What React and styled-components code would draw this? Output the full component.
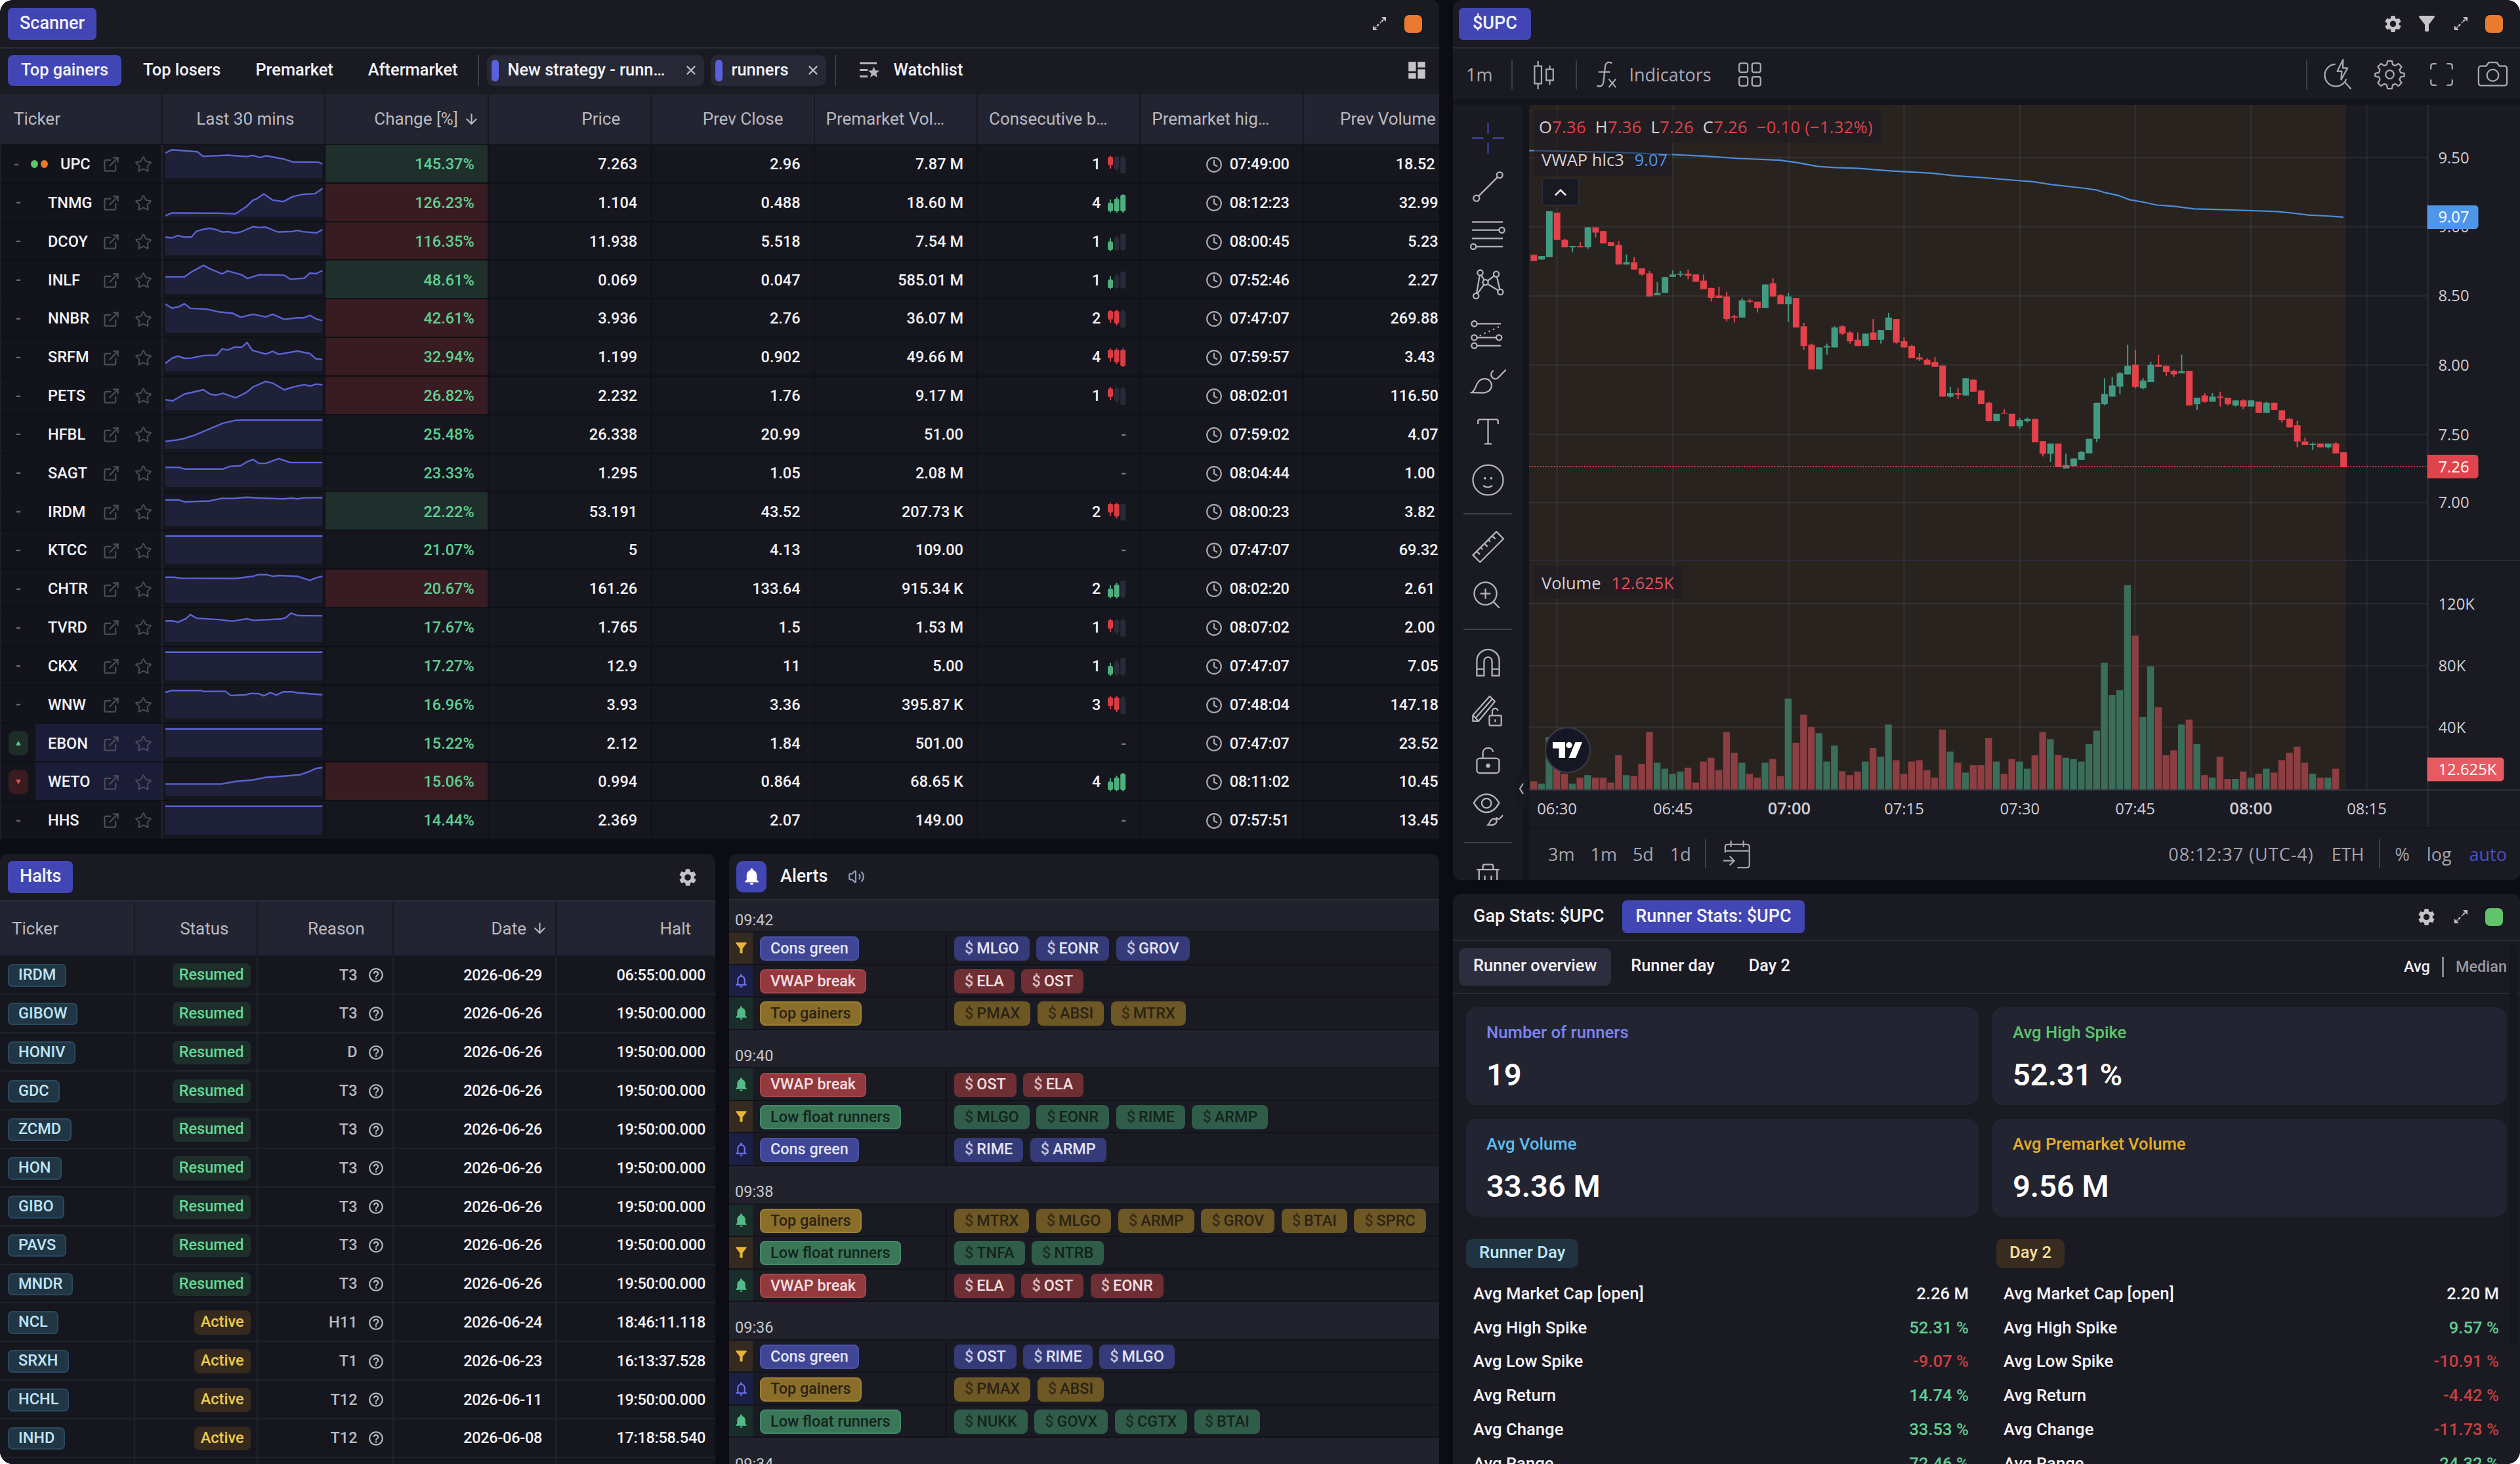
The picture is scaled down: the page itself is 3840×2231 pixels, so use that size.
import React from 'react';
import styled, { createGlobalStyle } from 'styled-components';
import { ArrowDown, Clock, ExternalLink, Star, Volume2, X } from 'lucide-react';
import {
  MdDashboard,
  MdFilterAlt,
  MdHelpOutline,
  MdNotifications,
  MdNotificationsNone,
  MdSettings,
} from 'react-icons/md';

const GlobalStyles = createGlobalStyle`
  :root {
    --page: #0c0c15;
    --panel: #1a1a23;
    --row: #15161e;
    --head: #232431;
    --line: #2b2b38;
    --accent: #4146b4;
    --text: #f2f2f5;
    --grey: #b8b8c0;
    --green: #5fce92;
    --red: #c9403f;
  }

  *,
  *::before,
  *::after {
    box-sizing: border-box;
  }

  body {
    margin: 0;
    background: #ffffff;
    color: var(--text);
    font-family: Roboto, sans-serif;
    font-size: 23.5px;
    font-weight: 500;
    line-height: 1;
  }

  svg {
    display: block;
    flex-shrink: 0;
  }
`;

const AppStyles = styled.div`
  width: 3840px;
  height: 2231px;
  display: grid;
  grid-template-columns: 2193px 1626px;
  column-gap: 21px;
  overflow: hidden;
  background: var(--page);
  border-radius: 20px;
`;

const LeftColumn = styled.div`
  display: grid;
  grid-template-rows: 1279px 930px;
  row-gap: 22px;
  min-width: 0;
`;

const RightColumn = styled.div`
  display: grid;
  grid-template-rows: 1341px 869px;
  row-gap: 21px;
  min-width: 0;
`;

const BottomRow = styled.div`
  display: grid;
  grid-template-columns: 1090px 1082px;
  column-gap: 21px;
  min-height: 0;
`;

const Panel = styled.section`
  display: flex;
  flex-direction: column;
  overflow: hidden;
  min-width: 0;
  background: var(--panel);
  border-radius: ${(props) => props.$radius || '12px 12px 0 0'};
`;

const PanelHeader = styled.header`
  flex-shrink: 0;
  display: flex;
  align-items: center;
  height: ${(props) => props.$height || 74}px;
  padding: 0 26px 0 ${(props) => props.$left || 12}px;
  border-bottom: 2px solid var(--line);
`;

const PanelTab = styled.button`
  height: ${(props) => props.$height || 49}px;
  padding: 0 ${(props) => props.$pad || 18}px 2px;
  margin-right: ${(props) => props.$gap || 0}px;
  border: 0;
  border-radius: 7px;
  background: ${(props) => (props.$active ? 'var(--accent)' : 'transparent')};
  color: var(--text);
  font: 500 27px/1 Roboto, sans-serif;
  white-space: nowrap;
`;

const Spacer = styled.div`
  flex: 1;
`;

const HeaderIcons = styled.div`
  display: flex;
  align-items: center;
  gap: ${(props) => props.$gap || 24}px;
  color: #c3c3c8;
`;

const FilterIcon = styled(MdFilterAlt)`
  margin: 0 -3px 0 -8px;
`;

const ColorSquare = styled.span`
  width: 27px;
  height: 27px;
  border-radius: 7px;
  background: ${(props) => props.$color};
`;

/* ---------- scanner ---------- */

const ScannerTabs = styled.nav`
  display: flex;
  align-items: center;
  height: 69px;
  padding: 2px 17px 5px 12px;
  flex-shrink: 0;
`;

const ScannerTab = styled.button`
  height: 47px;
  padding: 0 20px;
  margin-right: ${(props) => props.$gap ?? 13}px;
  border: 0;
  border-radius: 8px;
  background: ${(props) => (props.$active ? 'var(--accent)' : 'transparent')};
  color: var(--text);
  font: 500 25.4px/1 Roboto, sans-serif;
  white-space: nowrap;
`;

const TabDivider = styled.span`
  width: 2px;
  height: 47px;
  margin: 0 12px 0 ${(props) => props.$left || 0}px;
  background: #3d3e4b;
`;

const StrategyChip = styled.div`
  display: flex;
  align-items: center;
  height: 47px;
  width: ${(props) => props.$width}px;
  padding: 0 9px 0 7px;
  margin-right: ${(props) => props.$gap || 0}px;
  border-radius: 10px;
  background: #262835;
  font-size: 25.4px;

  i {
    width: 11px;
    height: 33px;
    margin-right: 13px;
    border-radius: 6px;
    background: #5a61dd;
  }

  svg {
    margin-left: auto;
    color: #c3c3c8;
  }
`;

const WatchlistLink = styled.div`
  display: flex;
  align-items: center;
  gap: 21px;
  margin-left: 24px;
  color: #b5b5bb;
  font-size: 25.4px;

  b {
    color: var(--text);
    font-weight: 500;
  }
`;

const ScannerGrid = styled.div`
  display: grid;
  grid-template-columns: 248px repeat(7, 248.4px) 206px;
  height: ${(props) => (props.$head ? '78px' : '58.84px')};
  flex-shrink: 0;
`;

const HeadCell = styled.div`
  display: flex;
  align-items: center;
  justify-content: ${(props) => (props.$align === 'left' ? 'flex-start' : 'flex-end')};
  padding: 0 ${(props) => props.$right ?? 46}px 0 ${(props) => props.$left ?? 15}px;
  gap: 8px;
  background: var(--head);
  border-right: 2px solid #171821;
  border-bottom: 2px solid #12131a;
  color: #b9b9c1;
  font-size: 26px;
  font-weight: 400;
  white-space: nowrap;

  &:last-child {
    border-right: 0;
  }
`;

const cellColors = {
  green: '#1e2f2c',
  red: '#391c21',
};

const ScannerCell = styled.div`
  display: flex;
  align-items: center;
  justify-content: flex-end;
  gap: 11px;
  padding: 3px ${(props) => props.$right ?? 20}px 0 0;
  background: ${(props) => cellColors[props.$tone] || 'var(--row)'};
  border-right: 2px solid #101119;
  border-bottom: 2px solid #0f1017;
  color: ${(props) => (props.$green ? 'var(--green)' : 'var(--text)')};
  letter-spacing: ${(props) => (props.$tight ? '-0.2px' : '0')};
  white-space: nowrap;

  &:last-child {
    border-right: 0;
  }
`;

const TickerCell = styled.div`
  display: flex;
  align-items: center;
  background: #12131b;
  border-left: 2px solid #1f2029;
  border-right: 2px solid #23242e;
  border-bottom: 2px solid #0f1017;
`;

const TrendSlot = styled.div`
  display: flex;
  align-items: center;
  justify-content: ${(props) => (props.$dots ? 'flex-start' : 'center')};
  width: ${(props) => (props.$dots ? 71 : 52)}px;
  padding: 2px 0 0 ${(props) => (props.$dots ? 19 : 0)}px;
  color: #6b6b74;
`;

const Dot = styled.span`
  width: 11px;
  height: 12px;
  margin-left: ${(props) => props.$left}px;
  border-radius: 50%;
  background: ${(props) => props.$color};
`;

const TrendBadge = styled.span`
  display: flex;
  align-items: center;
  justify-content: center;
  width: 30px;
  height: 37px;
  border-radius: 9px;
  background: ${(props) => (props.$up ? '#1d2e29' : '#3a1b20')};
`;

const TickerName = styled.div`
  flex: 1;
  display: flex;
  align-items: center;
  height: 100%;
  padding: 3px 0 0 19px;
  background: ${(props) => (props.$highlight ? '#1a1c38' : 'transparent')};

  svg {
    color: #4b4c57;
  }

  svg:first-of-type {
    margin-left: auto;
    margin-right: 22px;
  }

  svg:last-of-type {
    margin-right: 14px;
  }
`;

const SparkCell = styled(ScannerCell)`
  padding: 0 3px 6px 4px;
  align-items: flex-end;
  justify-content: flex-start;
`;

const Muted = styled.span`
  color: #7d7d86;
`;

const flat = [[0, 106], [338, 106]];

const scannerRows = [
  {
    ticker: 'UPC', dots: true, change: '145.37%', tone: 'green', price: '7.263', close: '2.96', vol: '7.87 M',
    bars: 1, dir: 'down', time: '07:49:00', prev: '18.52', wide: true,
    spark: [[0, 95], [14, 107], [69, 100], [81, 83], [134, 87], [174, 82], [189, 86], [204, 78], [216, 85], [254, 73], [274, 62], [329, 61], [338, 54]],
  },
  {
    ticker: 'TNMG', change: '126.23%', tone: 'red', price: '1.104', close: '0.488', vol: '18.60 M',
    bars: 4, dir: 'up', time: '08:12:23', prev: '32.99',
    spark: [[0, 6], [14, 16], [114, 15], [151, 13], [174, 39], [189, 64], [197, 69], [212, 87], [231, 64], [254, 58], [274, 77], [294, 85], [322, 88], [338, 107]],
  },
  {
    ticker: 'DCOY', change: '116.35%', tone: 'red', price: '11.938', close: '5.518', vol: '7.54 M',
    bars: 1, dir: 'up', time: '08:00:45', prev: '5.23',
    spark: [[0, 68], [14, 65], [27, 74], [41, 68], [56, 68], [67, 90], [82, 97], [96, 101], [109, 96], [122, 87], [136, 88], [149, 83], [162, 87], [189, 107], [202, 104], [216, 105], [242, 87], [274, 89], [284, 93], [296, 88], [326, 84], [338, 96]],
  },
  {
    ticker: 'INLF', change: '48.61%', tone: 'green', price: '0.069', close: '0.047', vol: '585.01 M',
    bars: 1, dir: 'up', time: '07:52:46', prev: '2.27',
    spark: [[0, 64], [41, 64], [54, 80], [82, 107], [96, 94], [122, 75], [134, 86], [164, 72], [176, 58], [202, 72], [256, 70], [269, 55], [299, 59], [311, 78], [324, 76], [338, 87]],
  },
  {
    ticker: 'NNBR', change: '42.61%', tone: 'red', price: '3.936', close: '2.76', vol: '36.07 M',
    bars: 2, dir: 'down', time: '07:47:07', prev: '269.88',
    spark: [[0, 107], [14, 92], [29, 97], [41, 108], [54, 91], [89, 88], [114, 78], [144, 73], [162, 58], [189, 69], [216, 59], [231, 69], [256, 50], [284, 56], [299, 56], [311, 65], [324, 52], [338, 45]],
  },
  {
    ticker: 'SRFM', change: '32.94%', tone: 'red', price: '1.199', close: '0.902', vol: '49.66 M',
    bars: 4, dir: 'down', time: '07:59:57', prev: '3.43', wide: true,
    spark: [[0, 30], [14, 49], [27, 57], [41, 49], [56, 50], [82, 59], [111, 61], [122, 84], [134, 80], [149, 91], [164, 90], [176, 108], [187, 79], [216, 65], [231, 75], [244, 64], [284, 76], [311, 67], [324, 47], [338, 44]],
  },
  {
    ticker: 'PETS', change: '26.82%', tone: 'red', price: '2.232', close: '1.76', vol: '9.17 M',
    bars: 1, dir: 'down', time: '08:02:01', prev: '116.50',
    spark: [[0, 39], [16, 35], [41, 60], [82, 76], [96, 60], [109, 56], [124, 63], [151, 46], [174, 66], [189, 87], [216, 107], [231, 101], [256, 76], [274, 86], [299, 95], [312, 90], [324, 97], [338, 95]],
  },
  {
    ticker: 'HFBL', change: '25.48%', price: '26.338', close: '20.99', vol: '51.00', time: '07:59:02', prev: '4.07',
    spark: [[0, 28], [24, 33], [39, 38], [64, 52], [94, 74], [124, 96], [149, 106], [164, 107], [338, 107]],
  },
  {
    ticker: 'SAGT', change: '23.33%', price: '1.295', close: '1.05', vol: '2.08 M', time: '08:04:44', prev: '1.00', wide: true,
    spark: [[0, 73], [29, 73], [41, 67], [124, 67], [139, 77], [162, 79], [176, 94], [189, 103], [201, 88], [216, 88], [244, 106], [269, 91], [338, 91]],
  },
  {
    ticker: 'IRDM', change: '22.22%', tone: 'green', price: '53.191', close: '43.52', vol: '207.73 K',
    bars: 2, dir: 'down', time: '08:00:23', prev: '3.82', wide: true,
    spark: [[0, 96], [29, 96], [41, 89], [94, 92], [122, 102], [144, 101], [174, 106], [204, 103], [254, 100], [272, 103], [284, 100], [299, 104], [338, 105]],
  },
  { ticker: 'KTCC', change: '21.07%', price: '5', close: '4.13', vol: '109.00', time: '07:47:07', prev: '69.32', spark: flat },
  {
    ticker: 'CHTR', change: '20.67%', tone: 'red', price: '161.26', close: '133.64', vol: '915.34 K',
    bars: 2, dir: 'up', time: '08:02:20', prev: '2.61', wide: true,
    spark: [[0, 96], [19, 96], [34, 93], [151, 92], [189, 100], [199, 106], [219, 106], [231, 100], [244, 103], [284, 100], [311, 85], [324, 94], [338, 100]],
  },
  {
    ticker: 'TVRD', change: '17.67%', price: '1.765', close: '1.5', vol: '1.53 M',
    bars: 1, dir: 'down', time: '08:07:02', prev: '2.00', wide: true,
    spark: [[0, 78], [16, 78], [27, 73], [44, 86], [54, 102], [67, 88], [114, 83], [144, 77], [176, 86], [189, 80], [249, 85], [259, 90], [271, 107], [284, 98], [338, 97]],
  },
  { ticker: 'CKX', change: '17.27%', price: '12.9', close: '11', vol: '5.00', bars: 1, dir: 'up', time: '07:47:07', prev: '7.05', spark: flat },
  {
    ticker: 'WNW', change: '16.96%', price: '3.93', close: '3.36', vol: '395.87 K',
    bars: 3, dir: 'down', time: '07:48:04', prev: '147.18',
    spark: [[0, 98], [14, 105], [76, 105], [84, 101], [129, 102], [141, 86], [174, 89], [184, 94], [201, 93], [212, 85], [226, 97], [239, 88], [254, 100], [274, 100], [284, 96], [338, 89]],
  },
  { ticker: 'EBON', trend: 'up', change: '15.22%', price: '2.12', close: '1.84', vol: '501.00', time: '07:47:07', prev: '23.52', spark: flat },
  {
    ticker: 'WETO', trend: 'down', change: '15.06%', tone: 'red', price: '0.994', close: '0.864', vol: '68.65 K',
    bars: 4, dir: 'up', time: '08:11:02', prev: '10.45',
    spark: [[0, 45], [122, 45], [149, 54], [189, 60], [214, 69], [254, 74], [289, 79], [309, 91], [324, 103], [338, 106]],
  },
  { ticker: 'HHS', change: '14.44%', price: '2.369', close: '2.07', vol: '149.00', time: '07:57:51', prev: '13.45', spark: flat },
];

function ExpandIcon({ size = 22 }) {
  return (
    <svg width={size} height={size} viewBox="0 0 22 22" fill="currentColor" stroke="currentColor">
      <path d="M14 1h7v7zM8 21H1v-7z" stroke="none" />
      <path d="M17 5l-5 5M10 12l-5 5" strokeWidth="2.4" fill="none" strokeDasharray="4 1.5" />
    </svg>
  );
}

function WatchlistIcon() {
  return (
    <svg width="30" height="26" viewBox="0 0 30 26" fill="currentColor">
      <path d="M0 1h26v3H0zM0 11h12v3H0zM0 21h12v3H0z" />
      <path d="M21.5 7.5l2.4 5.8 6.1.5-4.7 4 1.5 6.1-5.3-3.3-5.3 3.3 1.5-6.1-4.7-4 6.1-.5z" />
    </svg>
  );
}

function Sparkline({ points }) {
  const line = points.map(([x, h]) => `${(x * 0.708).toFixed(1)},${(46 - h * 0.408).toFixed(1)}`).join(' ');
  return (
    <svg width="239.3" height="46" viewBox="0 0 239.3 46" overflow="visible">
      <polygon points={`0,46 ${line} 239.3,46`} fill="#1f2139" />
      <polyline points={line} fill="none" stroke="#5b63d6" strokeWidth="2.4" strokeLinejoin="round" />
    </svg>
  );
}

// three little candles growing (up) or hanging (down), lit up to the streak length
function StreakIcon({ count, dir }) {
  const lit = dir === 'up' ? '#4fae7d' : '#d63c43';
  const heights = [20, 24, 28];
  return (
    <svg width="28" height="28" viewBox="0 0 28 28">
      {heights.map((h, i) => {
        const on = i < count && !(i === 2 && count < 4);
        const fill = on ? lit : '#2a2b38';
        const x = i * 9.6;
        const y = dir === 'up' ? 28 - h : 0;
        const bodyY = dir === 'up' ? y + 5 - i * 2 : y + 2;
        return (
          <g key={h} fill={fill}>
            <rect x={x + 3} y={y} width="2" height={h} />
            <rect x={x} y={bodyY} width="8" height={h - 7 + i * 2} rx="2" />
          </g>
        );
      })}
    </svg>
  );
}

function Scanner() {
  return (
    <Panel $radius="0 12px 0 0">
      <PanelHeader>
        <PanelTab $active>Scanner</PanelTab>
        <Spacer />
        <HeaderIcons $gap={27}>
          <ExpandIcon />
          <ColorSquare $color="#ea7b2e" />
        </HeaderIcons>
      </PanelHeader>
      <ScannerTabs>
        <ScannerTab $active>Top gainers</ScannerTab>
        <ScannerTab>Top losers</ScannerTab>
        <ScannerTab>Premarket</ScannerTab>
        <ScannerTab $gap={11}>Aftermarket</ScannerTab>
        <TabDivider />
        <StrategyChip $width={331} $gap={10}>
          <i />
          New strategy - runn…
          <X size={22} strokeWidth={2.4} />
        </StrategyChip>
        <StrategyChip $width={176}>
          <i />
          runners
          <X size={22} strokeWidth={2.4} />
        </StrategyChip>
        <TabDivider $left={13} />
        <WatchlistLink>
          <WatchlistIcon />
          <b>Watchlist</b>
        </WatchlistLink>
        <Spacer />
        <HeaderIcons>
          <MdDashboard size={34} />
        </HeaderIcons>
      </ScannerTabs>
      <ScannerGrid $head>
        <HeadCell $align="left" $left={21}>Ticker</HeadCell>
        <HeadCell>Last 30 mins</HeadCell>
        <HeadCell $right={12}>
          Change [%]
          <ArrowDown size={25} strokeWidth={2} />
        </HeadCell>
        <HeadCell>Price</HeadCell>
        <HeadCell>Prev Close</HeadCell>
        <HeadCell $align="left" $left={17}>Premarket Vol…</HeadCell>
        <HeadCell $align="left" $left={17}>Consecutive b…</HeadCell>
        <HeadCell $align="left" $left={17}>Premarket hig…</HeadCell>
        <HeadCell $right={5}>Prev Volume</HeadCell>
      </ScannerGrid>
      {scannerRows.map((row) => (
        <ScannerGrid key={row.ticker}>
          <TickerCell>
            <TrendSlot $dots={row.dots}>
              {!row.trend && '-'}
              {row.dots && (
                <>
                  <Dot $left={18} $color="#5fc46a" />
                  <Dot $left={4} $color="#ea7b2e" />
                </>
              )}
              {row.trend && (
                <TrendBadge $up={row.trend === 'up'}>
                  <svg width="8" height="7" viewBox="0 0 8 7">
                    {row.trend === 'up' ? (
                      <path d="M4 0l4 7H0z" fill="#58c98a" />
                    ) : (
                      <path d="M4 7l4-7H0z" fill="#e5544f" />
                    )}
                  </svg>
                </TrendBadge>
              )}
            </TrendSlot>
            <TickerName $highlight={row.trend}>
              {row.ticker}
              <ExternalLink size={27} strokeWidth={2} />
              <Star size={27} strokeWidth={1.8} />
            </TickerName>
          </TickerCell>
          <SparkCell>
            <Sparkline points={row.spark} />
          </SparkCell>
          <ScannerCell $green $tone={row.tone}>{row.change}</ScannerCell>
          <ScannerCell>{row.price}</ScannerCell>
          <ScannerCell>{row.close}</ScannerCell>
          <ScannerCell>{row.vol}</ScannerCell>
          <ScannerCell>
            {row.bars ? (
              <>
                {row.bars}
                <StreakIcon count={row.bars} dir={row.dir} />
              </>
            ) : (
              <Muted>-</Muted>
            )}
          </ScannerCell>
          <ScannerCell $tight>
            <Clock size={26} strokeWidth={2} color="#a9a9b0" />
            {row.time}
          </ScannerCell>
          <ScannerCell $right={row.wide ? 6 : 1}>{row.prev}</ScannerCell>
        </ScannerGrid>
      ))}
    </Panel>
  );
}

/* ---------- halts ---------- */

const HaltsGrid = styled.div`
  display: grid;
  grid-template-columns: 206px 186.5px 207px 248.5px 242px;
  height: ${(props) => (props.$head ? '83px' : '58.82px')};
  flex-shrink: 0;
`;

const HaltHead = styled(HeadCell)`
  border-bottom-color: #1c1d27;
`;

const HaltCell = styled.div`
  display: flex;
  align-items: center;
  justify-content: ${(props) => (props.$left ? 'flex-start' : 'flex-end')};
  gap: 15px;
  padding: 2px ${(props) => props.$right ?? 20}px 0 ${(props) => props.$left ?? 0}px;
  background: var(--row);
  border-right: 2px solid #21222c;
  border-bottom: 2px solid #21222c;
  color: ${(props) => (props.$muted ? '#b9bac2' : 'var(--text)')};
  letter-spacing: ${(props) => (props.$tight ? '-0.3px' : '0')};

  &:last-child {
    border-right: 0;
  }
`;

const TickerTag = styled.span`
  padding: 3px 14px 4px;
  border: 2px solid #28495c;
  border-radius: 7px;
  background: #203644;
  color: #bfe3f5;
`;

const StatusTag = styled.span`
  padding: 6px 10px 7px;
  border-radius: 8px;
  background: ${(props) => (props.$active ? '#362a1f' : '#1e2f2b')};
  color: ${(props) => (props.$active ? '#eccb4a' : '#63d793')};
`;

const halts = [
  ['IRDM', 'Resumed', 'T3', '2026-06-29', '06:55:00.000'],
  ['GIBOW', 'Resumed', 'T3', '2026-06-26', '19:50:00.000'],
  ['HONIV', 'Resumed', 'D', '2026-06-26', '19:50:00.000'],
  ['GDC', 'Resumed', 'T3', '2026-06-26', '19:50:00.000'],
  ['ZCMD', 'Resumed', 'T3', '2026-06-26', '19:50:00.000'],
  ['HON', 'Resumed', 'T3', '2026-06-26', '19:50:00.000'],
  ['GIBO', 'Resumed', 'T3', '2026-06-26', '19:50:00.000'],
  ['PAVS', 'Resumed', 'T3', '2026-06-26', '19:50:00.000'],
  ['MNDR', 'Resumed', 'T3', '2026-06-26', '19:50:00.000'],
  ['NCL', 'Active', 'H11', '2026-06-24', '18:46:11.118'],
  ['SRXH', 'Active', 'T1', '2026-06-23', '16:13:37.528'],
  ['HCHL', 'Active', 'T12', '2026-06-11', '19:50:00.000'],
  ['INHD', 'Active', 'T12', '2026-06-08', '17:18:58.540'],
];

function Halts() {
  return (
    <Panel>
      <PanelHeader $height={73}>
        <PanelTab $active>Halts</PanelTab>
        <Spacer />
        <HeaderIcons>
          <MdSettings size={32} />
        </HeaderIcons>
      </PanelHeader>
      <HaltsGrid $head>
        <HaltHead $align="left" $left={18}>Ticker</HaltHead>
        <HaltHead $right={42}>Status</HaltHead>
        <HaltHead $right={42}>Reason</HaltHead>
        <HaltHead $right={11}>
          Date
          <ArrowDown size={25} strokeWidth={2} />
        </HaltHead>
        <HaltHead $right={37}>Halt</HaltHead>
      </HaltsGrid>
      {halts.map(([ticker, status, reason, date, time]) => (
        <HaltsGrid key={ticker}>
          <HaltCell $left={12}>
            <TickerTag>{ticker}</TickerTag>
          </HaltCell>
          <HaltCell $right={9}>
            <StatusTag $active={status === 'Active'}>{status}</StatusTag>
          </HaltCell>
          <HaltCell $muted $right={12}>
            {reason}
            <MdHelpOutline size={26} />
          </HaltCell>
          <HaltCell $tight>{date}</HaltCell>
          <HaltCell $tight $right={15}>{time}</HaltCell>
        </HaltsGrid>
      ))}
      <HaltsGrid>
        <HaltCell />
        <HaltCell />
        <HaltCell />
        <HaltCell />
        <HaltCell />
      </HaltsGrid>
    </Panel>
  );
}

/* ---------- alerts ---------- */

const BellTab = styled.button`
  display: flex;
  align-items: center;
  justify-content: center;
  width: 46px;
  height: 48px;
  padding: 0;
  border: 0;
  border-radius: 10px;
  background: var(--accent);
  color: #ffffff;
`;

const AlertsTitle = styled.h2`
  margin: 0 31px 0 21px;
  font-size: 27px;
  font-weight: 500;
`;

const AlertTime = styled.div`
  display: flex;
  align-items: flex-end;
  height: ${(props) => (props.$first ? 49 : 58.8)}px;
  padding: 0 0 5px 9px;
  flex-shrink: 0;
  background: #21222c;
  border-bottom: 2px solid #14151d;
  color: #c7c8ce;
  font-weight: 400;
`;

const AlertRow = styled.div`
  display: grid;
  grid-template-columns: 36px 296px 1fr;
  height: 49.5px;
  flex-shrink: 0;
  border-bottom: 2px solid #12131a;
`;

const kindColors = {
  filter: { bg: '#352a20', fg: '#e9b43a' },
  outline: { bg: '#1c1f45', fg: '#6d75ee' },
  bell: { bg: '#1b2d2a', fg: '#54bb86' },
};

const AlertKind = styled.div`
  display: flex;
  align-items: center;
  justify-content: center;
  background: ${(props) => kindColors[props.$kind].bg};
  color: ${(props) => kindColors[props.$kind].fg};
`;

const strategyColors = {
  'Cons green': { name: '#3f4695', border: '#4a52ab', tick: '#353a78', text: '#e3e4f4' },
  'VWAP break': { name: '#93393d', border: '#a64549', tick: '#6e2f34', text: '#f2dfe0' },
  'Top gainers': { name: '#8b6e2a', border: '#9c7d33', tick: '#6d5725', text: '#2a2314' },
  'Low float runners': { name: '#3a7758', border: '#45896a', tick: '#305d49', text: '#14231d' },
};

const AlertCell = styled.div`
  display: flex;
  align-items: center;
  gap: 10.5px;
  padding: 2px 0 0 11px;
  border-right: ${(props) => (props.$divider ? '2px solid #12131a' : '0')};
`;

const AlertTag = styled.span`
  display: flex;
  align-items: center;
  height: 37px;
  padding: 0 14px;
  border: 2px solid ${(props) => strategyColors[props.$strategy][props.$main ? 'border' : 'tick']};
  border-radius: 8px;
  background: ${(props) => strategyColors[props.$strategy][props.$main ? 'name' : 'tick']};
  color: ${(props) => strategyColors[props.$strategy].text};
  font-size: 23.4px;
  white-space: nowrap;

  small {
    margin-right: 5px;
    font-size: inherit;
    opacity: 0.8;
  }
`;

const alertGroups = [
  {
    time: '09:42',
    rows: [
      ['filter', 'Cons green', ['MLGO', 'EONR', 'GROV']],
      ['outline', 'VWAP break', ['ELA', 'OST']],
      ['bell', 'Top gainers', ['PMAX', 'ABSI', 'MTRX']],
    ],
  },
  {
    time: '09:40',
    rows: [
      ['bell', 'VWAP break', ['OST', 'ELA']],
      ['filter', 'Low float runners', ['MLGO', 'EONR', 'RIME', 'ARMP']],
      ['outline', 'Cons green', ['RIME', 'ARMP']],
    ],
  },
  {
    time: '09:38',
    rows: [
      ['bell', 'Top gainers', ['MTRX', 'MLGO', 'ARMP', 'GROV', 'BTAI', 'SPRC']],
      ['filter', 'Low float runners', ['TNFA', 'NTRB']],
      ['bell', 'VWAP break', ['ELA', 'OST', 'EONR']],
    ],
  },
  {
    time: '09:36',
    rows: [
      ['filter', 'Cons green', ['OST', 'RIME', 'MLGO']],
      ['outline', 'Top gainers', ['PMAX', 'ABSI']],
      ['bell', 'Low float runners', ['NUKK', 'GOVX', 'CGTX', 'BTAI']],
    ],
  },
  { time: '09:34', rows: [] },
];

const kindIcons = {
  filter: MdFilterAlt,
  outline: MdNotificationsNone,
  bell: MdNotifications,
};

function Alerts() {
  return (
    <Panel>
      <PanelHeader $height={71} $left={11}>
        <BellTab>
          <MdNotifications size={31} />
        </BellTab>
        <AlertsTitle>Alerts</AlertsTitle>
        <Volume2 size={26} color="#8f9cb8" />
      </PanelHeader>
      {alertGroups.map((group, i) => (
        <React.Fragment key={group.time}>
          <AlertTime $first={i === 0}>{group.time}</AlertTime>
          {group.rows.map(([kind, strategy, tickers]) => {
            const Icon = kindIcons[kind];
            return (
              <AlertRow key={strategy}>
                <AlertKind $kind={kind}>
                  <Icon size={25} />
                </AlertKind>
                <AlertCell $divider>
                  <AlertTag $main $strategy={strategy}>{strategy}</AlertTag>
                </AlertCell>
                <AlertCell>
                  {tickers.map((ticker) => (
                    <AlertTag key={ticker} $strategy={strategy}>
                      <small>$</small>
                      {ticker}
                    </AlertTag>
                  ))}
                </AlertCell>
              </AlertRow>
            );
          })}
        </React.Fragment>
      ))}
    </Panel>
  );
}

/* ---------- chart ---------- */

const chartFont = "'Open Sans', 'Noto Sans', sans-serif";

const ChartToolbar = styled.div`
  display: flex;
  align-items: center;
  height: 77px;
  flex-shrink: 0;
  padding: 2px 14px 0 20px;
  color: #a9aab2;
  font: 400 27px/1 ${chartFont};
`;

const ToolbarRule = styled.span`
  width: 2px;
  height: 44px;
  margin: 0 ${(props) => props.$right ?? 0}px 0 ${(props) => props.$left ?? 0}px;
  background: #3e3f4a;
`;

const ToolbarActions = styled.div`
  display: flex;
  gap: 23.3px;
`;

const ChartBody = styled.div`
  flex: 1;
  display: grid;
  grid-template-columns: 106px 1510px;
  column-gap: 10px;
  padding-top: 9px;
  min-height: 0;
  background: #14151d;
`;

const ToolRail = styled.div`
  display: flex;
  flex-direction: column;
  align-items: center;
  padding-top: 13px;
  overflow: hidden;
  background: var(--panel);
  border-radius: 0 8px 0 0;
  color: #b4b5bc;
`;

const ToolButton = styled.div`
  flex-shrink: 0;
  display: flex;
  align-items: center;
  justify-content: center;
  height: 74.5px;
  color: ${(props) => (props.$active ? '#3f449f' : 'inherit')};
`;

const ToolDivider = styled.div`
  flex-shrink: 0;
  width: 74px;
  height: 2px;
  margin: 12.5px 0;
  background: #3f404c;
`;

const ChartArea = styled.div`
  position: relative;
  display: flex;
  flex-direction: column;
  justify-content: space-between;
  min-height: 0;
`;

const ChartFooter = styled.div`
  display: flex;
  align-items: center;
  height: 79px;
  padding: 0 20px 1px 29px;
  background: var(--panel);
  color: #a3a4ad;
  font: 400 27px/1 ${chartFont};
`;

const FooterItem = styled.span`
  margin-right: ${(props) => props.$gap ?? 27}px;
  letter-spacing: ${(props) => props.$spacing || 0};
  color: ${(props) => (props.$accent ? '#4c51cb' : 'inherit')};
`;

const Legend = styled.div`
  position: absolute;
  top: ${(props) => props.$top}px;
  left: 8px;
  height: 50px;
  padding: 2px ${(props) => props.$right ?? 12}px 0 ${(props) => props.$pad ?? 11}px;
  display: flex;
  align-items: center;
  background: rgba(27, 26, 35, 0.55);
  color: #d3d3d7;
  font: 400 25.5px/1 ${chartFont};
  letter-spacing: ${(props) => props.$spacing || 0};
  white-space: nowrap;

  em {
    margin-right: 14px;
    color: ${(props) => props.$color};
    font-style: normal;
  }

  em:last-child {
    margin-right: 0;
  }

  b {
    margin-right: 16px;
    font-weight: 400;
  }
`;

const CollapseButton = styled.button`
  position: absolute;
  top: 111px;
  left: 19px;
  display: flex;
  align-items: center;
  justify-content: center;
  width: 58px;
  height: 43px;
  padding: 0;
  border: 2px solid #2b2c3b;
  border-radius: 6px;
  background: #191922;
`;

const RailHandle = styled.div`
  position: absolute;
  top: 1015px;
  left: -21px;
  display: flex;
  align-items: center;
  justify-content: center;
  width: 18px;
  height: 54px;
  border-radius: 9px;
  background: #181820;
`;

const LogoBadge = styled.div`
  position: absolute;
  top: 948px;
  left: 24px;
  display: flex;
  align-items: center;
  justify-content: center;
  width: 70px;
  height: 70px;
  border: 2px solid #3b3b4a;
  border-radius: 50%;
  background: #161724;
`;

// d = down, u = up; body top / bottom, wick top / bottom, volume top
const candles = [
  ['d', 870, 891, 870, 891, 1165], ['u', 874, 886, 874, 886, 1174], ['u', 721, 878, 721, 878, 1005],
  ['d', 726, 819, 726, 819, 1110], ['d', 819, 844, 815, 844, 1138], ['u', 840, 844, 840, 861, 1174],
  ['d', 840, 844, 827, 844, 1152], ['u', 776, 844, 776, 849, 1143], ['d', 776, 794, 776, 811, 1152],
  ['d', 789, 831, 789, 831, 1152], ['d', 827, 840, 827, 840, 1170], ['d', 836, 903, 823, 903, 1071],
  ['u', 895, 903, 869, 903, 1143], ['d', 895, 920, 878, 920, 1147], ['d', 916, 937, 916, 941, 1102],
  ['d', 933, 1012, 925, 1012, 987], ['u', 1000, 1008, 963, 1008, 1098], ['u', 946, 1000, 946, 1000, 1120],
  ['u', 937, 945, 924, 945, 1138], ['u', 934, 938, 925, 945, 1130], ['d', 934, 941, 920, 953, 1116],
  ['d', 937, 962, 937, 962, 1170], ['d', 958, 987, 937, 987, 1094], ['d', 983, 1017, 983, 1029, 1080],
  ['d', 1009, 1017, 979, 1017, 1125], ['d', 1012, 1089, 996, 1097, 987], ['d', 1080, 1084, 1075, 1101, 1062],
  ['u', 1025, 1084, 1018, 1084, 1098], ['d', 1026, 1030, 1020, 1035, 1138], ['d', 1030, 1051, 1030, 1067, 1152],
  ['u', 971, 1051, 971, 1051, 1098], ['d', 967, 1012, 950, 1012, 1085], ['d', 1008, 1038, 1004, 1038, 1147],
  ['u', 1012, 1038, 1000, 1098, 866], ['d', 1017, 1118, 1017, 1118, 1026], ['d', 1114, 1181, 1102, 1194, 924],
  ['d', 1177, 1261, 1173, 1261, 969], ['u', 1186, 1261, 1186, 1261, 991], ['u', 1181, 1186, 1173, 1211, 1094],
  ['u', 1118, 1186, 1114, 1186, 1036], ['d', 1114, 1139, 1110, 1144, 1129], ['d', 1135, 1165, 1131, 1173, 1143],
  ['d', 1160, 1181, 1135, 1181, 1130], ['u', 1139, 1181, 1139, 1181, 1094], ['d', 1135, 1160, 1089, 1160, 1045],
  ['u', 1127, 1160, 1127, 1173, 1076], ['u', 1084, 1127, 1068, 1127, 960], ['d', 1089, 1169, 1089, 1173, 1089],
  ['d', 1165, 1186, 1152, 1186, 1138], ['d', 1181, 1223, 1177, 1223, 1094], ['d', 1220, 1227, 1206, 1232, 1089],
  ['d', 1228, 1245, 1223, 1245, 1125], ['d', 1236, 1252, 1219, 1252, 1152], ['d', 1248, 1354, 1248, 1354, 978],
  ['u', 1342, 1354, 1321, 1358, 1058], ['d', 1342, 1348, 1325, 1362, 1098], ['u', 1291, 1350, 1291, 1350, 1134],
  ['d', 1296, 1337, 1296, 1337, 1107], ['d', 1333, 1380, 1333, 1380, 1107], ['d', 1375, 1438, 1371, 1438, 1009],
  ['u', 1413, 1438, 1413, 1438, 1094], ['d', 1409, 1412, 1397, 1412, 1138], ['d', 1413, 1455, 1413, 1455, 1085],
  ['u', 1434, 1455, 1427, 1464, 1094], ['u', 1430, 1438, 1426, 1442, 1120], ['d', 1430, 1510, 1430, 1510, 1071],
  ['d', 1506, 1549, 1506, 1558, 987], ['u', 1514, 1549, 1514, 1577, 1013], ['d', 1514, 1595, 1514, 1595, 1071],
  ['u', 1588, 1599, 1549, 1599, 1080], ['u', 1565, 1591, 1565, 1591, 1085], ['u', 1543, 1570, 1539, 1570, 1094],
  ['u', 1498, 1548, 1498, 1548, 1031], ['u', 1375, 1498, 1375, 1510, 982], ['u', 1345, 1380, 1291, 1384, 736],
  ['u', 1316, 1354, 1287, 1354, 853], ['u', 1274, 1320, 1270, 1345, 835], ['u', 1249, 1278, 1177, 1278, 455],
  ['d', 1245, 1321, 1194, 1325, 638], ['u', 1299, 1325, 1291, 1329, 933], ['u', 1245, 1304, 1236, 1304, 749],
  ['d', 1245, 1252, 1211, 1252, 897], ['d', 1249, 1270, 1249, 1283, 1071], ['d', 1266, 1278, 1262, 1286, 1053],
  ['u', 1267, 1274, 1211, 1274, 960], ['d', 1266, 1384, 1266, 1384, 942], ['u', 1358, 1380, 1358, 1400, 1031],
  ['d', 1350, 1371, 1342, 1375, 1143], ['u', 1354, 1371, 1342, 1371, 1152], ['d', 1354, 1358, 1337, 1388, 1076],
  ['d', 1358, 1380, 1358, 1384, 1157], ['u', 1367, 1384, 1367, 1388, 1157], ['d', 1367, 1388, 1363, 1396, 1130],
  ['u', 1367, 1388, 1367, 1388, 1152], ['d', 1371, 1409, 1371, 1409, 1138], ['u', 1375, 1409, 1371, 1409, 1120],
  ['d', 1375, 1400, 1375, 1400, 1134], ['d', 1401, 1434, 1401, 1442, 1089], ['d', 1430, 1459, 1426, 1459, 1062],
  ['d', 1452, 1507, 1436, 1527, 1040], ['d', 1507, 1519, 1494, 1519, 1098], ['u', 1515, 1519, 1511, 1536, 1138],
  ['d', 1514, 1527, 1514, 1527, 1152], ['u', 1514, 1527, 1514, 1531, 1152], ['d', 1514, 1548, 1510, 1548, 1120],
  ['d', 1544, 1595, 1544, 1595, 1197],
];

const vwap =
  '2330,229.5 2373,230.3 2461,232.1 2549,235.7 2597,237.9 2650,241.5 2712,244.2 2739,247.8 2770,253.6 2796,255.3 2833,256.7 2880,260.3 2943,263.8 2979,267.8 3020,270.5 3067,274.5 3098,276.8 3125,281.2 3177,287 3195,289.7 3208,293.7 3229,298.2 3245,304.4 3266,308 3287,312.5 3313,314.3 3344,318.3 3376,319.2 3417,320.5 3470,322.3 3496,325 3517,327.7 3543,329 3571,330.8';

const priceTicks = [['9.50', 240.2], ['9.00', 345.5], ['8.50', 450.9], ['8.00', 556.2], ['7.50', 662], ['7.00', 765.7]];
const volumeTicks = [['120K', 920], ['80K', 1014.4], ['40K', 1108.3]];
const timeTicks = [
  ['06:30', 2372.6], ['06:45', 2549.3], ['07:00', 2726.4, true], ['07:15', 2901.5],
  ['07:30', 3077.8], ['07:45', 3253.5], ['08:00', 3430, true], ['08:15', 3606.5],
];

const PlotText = styled.text`
  fill: ${(props) => props.$color || '#cdced3'};
  font-family: ${chartFont};
  font-size: ${(props) => props.$size || 23.8}px;
  font-weight: ${(props) => (props.$strong ? 600 : 500)};
  dominant-baseline: central;
`;

function Plot() {
  return (
    <svg width="1510" height="1100" viewBox="2330 160 1510 1100">
      <path d="M2330 166a6 6 0 0 1 6-6H3840V1260H2330z" fill="#1a1a23" />
      <path d="M2330 166a6 6 0 0 1 6-6H3575V1204H2330z" fill="#29231f" />
      <g stroke="#9090a8" strokeOpacity="0.13" strokeWidth="2">
        {timeTicks.map(([label, x]) => (
          <line key={label} x1={x} x2={x} y1="160" y2="1204" />
        ))}
        {[...priceTicks, ...volumeTicks].map(([label, y]) => (
          <line key={label} x1="2330" x2="3699" y1={y} y2={y} />
        ))}
      </g>
      <line x1="2330" x2="3840" y1="854" y2="854" stroke="#2b2c3a" strokeWidth="2" />
      {candles.map(([dir, , , , , top], i) => (
        <rect
          key={i}
          x={2337.4 + i * 11.75 - 5.5}
          y={700 + top * 0.421}
          width="10.4"
          height={(1197 - top) * 0.421}
          fill={dir === 'u' ? '#3a6d5a' : '#8c3e42'}
        />
      ))}
      <polyline points={vwap} fill="none" stroke="#4a8fdd" strokeWidth="2.2" strokeLinejoin="round" />
      {candles.map(([dir, top, bottom, high, low], i) => {
        const x = 2337.4 + i * 11.75;
        return (
          <g key={i} fill={dir === 'u' ? '#429a82' : '#e4414b'}>
            <rect x={x - 1} y={high * 0.4464} width="2" height={(low - high) * 0.4464} />
            <rect x={x - 5} y={top * 0.4464} width="10" height={(bottom - top) * 0.4464} />
          </g>
        );
      })}
      <line x1="2330" x2="3699" y1="711" y2="711" stroke="#e4414b" strokeWidth="2" strokeDasharray="1.7 2.5" />
      <line x1="2330" x2="3840" y1="1204" y2="1204" stroke="#2e2f3c" strokeWidth="2" />
      <line x1="3699.5" x2="3699.5" y1="160" y2="1260" stroke="#2e2f3c" strokeWidth="2" />
      {[...priceTicks, ...volumeTicks].map(([label, y]) => (
        <PlotText key={label} x="3715.5" y={y - 0.5}>{label}</PlotText>
      ))}
      {timeTicks.map(([label, x, strong]) => (
        <PlotText key={label} x={x} y={strong ? 1230.5 : 1231.5} $size={strong ? 25.5 : 23.8} $strong={strong} textAnchor="middle">
          {label}
        </PlotText>
      ))}
      <path d="M3698.5 313h73a5 5 0 0 1 5 5v26a5 5 0 0 1-5 5h-73z" fill="#4d96ea" />
      <PlotText x="3715.5" y="330" $color="#ffffff">9.07</PlotText>
      <path d="M3698.5 693h73a5 5 0 0 1 5 5v26a5 5 0 0 1-5 5h-73z" fill="#e0434c" />
      <PlotText x="3715.5" y="710.5" $color="#ffffff">7.26</PlotText>
      <path d="M3698.5 1154.5h112a5 5 0 0 1 5 5v26a5 5 0 0 1-5 5h-112z" fill="#e85a62" />
      <PlotText x="3715.5" y="1171.5" $color="#ffffff">12.625K</PlotText>
    </svg>
  );
}

function LineIcon({ size = 55, children }) {
  return (
    <svg width={size} height={size} viewBox="0 0 28 28" fill="none" stroke="currentColor" strokeWidth="1.15">
      {children}
    </svg>
  );
}

const drawingTools = [
  <LineIcon>
    <path d="M1.5 14h9M17.5 14h9M14 2v8.500M14 17.500V26" />
  </LineIcon>,
  <LineIcon>
    <path d="M6.700 21.300L21.300 6.700" />
    <circle cx="5" cy="23" r="2.300" />
    <circle cx="23" cy="5" r="2.300" />
  </LineIcon>,
  <LineIcon>
    <path d="M1.500 3.200h24M1.500 9.500h21M1.500 16h24M4.800 22.300h20.700" />
    <circle cx="24.700" cy="9.500" r="2.100" />
    <circle cx="2.600" cy="22.300" r="2.100" />
  </LineIcon>,
  <LineIcon>
    <path d="M5.1 20.8L7.5 7.1M8.8 6.9l2.2 3.6M13.6 11.2l5.2-3.9M20.9 8.1l2.2 9.7M13.5 13.6l8.4 5M10.8 14.2l-5 6.9" />
    <circle cx="7.9" cy="4.9" r="2.1" />
    <circle cx="20.4" cy="6" r="2.1" />
    <circle cx="12" cy="12.4" r="2.1" />
    <circle cx="4.7" cy="22.9" r="2.1" />
    <circle cx="23.6" cy="19.9" r="2.1" />
  </LineIcon>,
  <LineIcon>
    <path d="M5.4 6.3H24M5.4 17h15M5.4 23.3H24" />
    <path d="M7.5 15.5L24 8" strokeDasharray="1.2 2.6" />
    <circle cx="3.3" cy="6.3" r="2.1" />
    <circle cx="3.3" cy="17" r="2.1" />
    <circle cx="22.5" cy="17" r="2.1" />
    <circle cx="3.3" cy="23.3" r="2.1" />
  </LineIcon>,
  <LineIcon>
    <path d="M1.3 22c2.6-1.500 2.900-4.400 4.300-7 1.300-2.300 3.400-3.900 6.200-3.700 3.300.3 5.400 3 4.900 6-.5 2.900-3.200 4.900-6.400 4.900z" />
    <path d="M18.300 5c-1.900 1-2.600 3.400-1.100 5.200 1.300 1.600 3.400 1.500 4.700.2l6-6.200" />
  </LineIcon>,
  <LineIcon>
    <path d="M6.2 8.200V6.200c0-.9.6-1.500 1.500-1.500h12.600c.9 0 1.500.6 1.500 1.500v2M14 4.700V23.600M11.200 23.600h5.600" />
  </LineIcon>,
  <LineIcon>
    <circle cx="14" cy="14" r="11.7" />
    <path d="M10.300 18.200c1.800 1.900 5.200 1.900 7 0" />
    <path d="M10.800 12.600h1.400M15.800 12.600h1.400" strokeWidth="1.7" />
  </LineIcon>,
  'rule',
  <LineIcon>
    <path d="M2.3 20.3L20.500 2.100l5.500 5.500L7.800 25.800z" strokeLinejoin="round" />
    <path d="M5.200 17.400l2.400 2.400M8.200 14.400l1.600 1.600M11.200 11.400l2.400 2.400M14.200 8.400l1.600 1.600M17.200 5.400l2.400 2.400" />
  </LineIcon>,
  <LineIcon>
    <circle cx="12" cy="12.5" r="8.700" />
    <path d="M12 8.500v8M8 12.500h8M18.200 18.900l4.600 4.800" />
  </LineIcon>,
  'rule',
  <LineIcon>
    <path d="M5.3 24.200V12.700a8.700 8.700 0 0 1 17.400 0v11.500h-5.600V13a3.100 3.100 0 0 0-6.200 0v11.200zM5.300 19.200h5.600M17.100 19.200h5.600" />
  </LineIcon>,
  <LineIcon>
    <path d="M2.2 21.8v-4.500L15.300 2.600l4 4L6.700 21.800zM4.700 19L17 5M2.200 17.300l4.500 4.500" strokeLinejoin="round" />
    <rect x="15" y="17.5" width="9.3" height="7.8" rx="1" />
    <path d="M17.300 17.500v-3c0-3.200 4-3.200 4.300-.6M19.600 20.500v2" />
  </LineIcon>,
  <LineIcon>
    <rect x="5.3" y="12.5" width="17.3" height="11.500" rx="2.3" />
    <path d="M10 12.500V8.300c0-4.600 7-5.300 8-.8" />
    <circle cx="14" cy="18.2" r="1.1" fill="currentColor" />
  </LineIcon>,
  <LineIcon>
    <path d="M3 9.500C5.200 5.500 8.600 2.700 12.800 2.700s7.600 2.800 9.800 6.800c-2.200 4-5.600 7.300-9.800 7.300S5.200 13.500 3 9.500z" />
    <circle cx="12.8" cy="9.7" r="3.7" />
    <path d="M14 26.500c1.500-1 1.200-4 4-4.700 2.500-.4 3.500 2.200 1.800 3.700-1.300 1.200-3.500 1.300-5.800 1zM20.500 20.500c.3 2 2 1.800 3 .7l2-2.200" />
  </LineIcon>,
  'rule',
  <LineIcon>
    <path d="M5.2 9.200h17.600M7 9.200V26h14V9.200M10 9.200V6.800c0-1 .6-1.500 1.500-1.500h5c.9 0 1.500.5 1.500 1.500v2.400M11.500 14v9M16.500 14v9" />
  </LineIcon>,
];

const IndicatorsButton = styled.div`
  display: flex;
  align-items: center;
  gap: 6px;
  margin-left: 18px;
  margin-right: 31px;
`;

function ChartPanel() {
  return (
    <Panel $radius="12px 0 12px 12px">
      <PanelHeader $left={9}>
        <PanelTab $active $pad={21}>$UPC</PanelTab>
        <Spacer />
        <HeaderIcons $gap={26}>
          <MdSettings size={31} />
          <FilterIcon size={36} />
          <ExpandIcon />
          <ColorSquare $color="#ea7b2e" />
        </HeaderIcons>
      </PanelHeader>
      <ChartToolbar>
        1m
        <ToolbarRule $left={29} $right={20} />
        <LineIcon>
          <path d="M9.5 3.500v4M9.500 21v4.500M18.600 7v3M18.600 18.500v3.500M6.800 7.500h5.400V21H6.800zM15.900 10h5.400v8.500h-5.400z" />
        </LineIcon>
        <ToolbarRule $left={21} />
        <IndicatorsButton>
          <LineIcon>
            <path d="M7.500 12h9M18 5.300c-3.200-1.900-5-.1-5.300 2.700L11.500 19c-.3 3.500-2 5-5.200 3.700M15.500 17.500l5.500 6.500M21 17.500L15.500 24" />
          </LineIcon>
          Indicators
        </IndicatorsButton>
        <LineIcon>
          <rect x="5.700" y="5.300" width="6.600" height="7" rx="1.500" />
          <rect x="15.700" y="5.300" width="6.600" height="7" rx="1.500" />
          <rect x="5.700" y="15.800" width="6.600" height="7" rx="1.500" />
          <rect x="15.700" y="15.800" width="6.600" height="7" rx="1.500" />
        </LineIcon>
        <Spacer />
        <ToolbarRule $right={20} />
        <ToolbarActions>
          <LineIcon>
            <path d="M11.500 6A8.600 8.600 0 1 0 20 17.500M18.500 19.500l5.200 5.800" />
            <path d="M17.500 2.500L13 11.500h3.500l-.5 6.500 5-9h-3.700z" strokeLinejoin="round" />
          </LineIcon>
          <LineIcon>
            <circle cx="14" cy="14" r="3.200" />
            <path
              d="M12.300 3.500h3.400l.6 2.900 2 .8 2.500-1.600 2.400 2.400-1.600 2.500.8 2 2.900.6v2.300l-2.900.6-.8 2 1.600 2.500-2.400 2.400-2.500-1.600-2 .8-.6 2.900h-3.400l-.6-2.900-2-.8-2.500 1.600-2.400-2.400 1.600-2.500-.8-2-2.900-.6v-2.300l2.900-.6.8-2-1.600-2.500 2.400-2.400 2.500 1.600 2-.8z"
              strokeLinejoin="round"
            />
          </LineIcon>
          <LineIcon>
            <path d="M5.700 10V7.700c0-1.300.7-2 2-2H10M18 5.700h2.300c1.300 0 2 .7 2 2V10M22.300 18v2.300c0 1.300-.7 2-2 2H18M10 22.300H7.700c-1.300 0-2-.7-2-2V18" />
          </LineIcon>
          <LineIcon>
            <path d="M4.800 7.500h4.100l2-2.800h6.200l2 2.800h4.100c1 0 1.800.8 1.800 1.800v11.500c0 1-.8 1.800-1.800 1.800H4.800c-1 0-1.800-.8-1.800-1.800V9.300c0-1 .8-1.800 1.800-1.800z" />
            <circle cx="14" cy="14.600" r="4.500" />
          </LineIcon>
        </ToolbarActions>
      </ChartToolbar>
      <ChartBody>
        <ToolRail>
          {drawingTools.map((tool, i) =>
            tool === 'rule' ? <ToolDivider key={i} /> : <ToolButton key={i} $active={i === 0}>{tool}</ToolButton>
          )}
        </ToolRail>
        <ChartArea>
          <Plot />
          <Legend $top={8} $pad={7} $spacing="0.3px" $color="#dd424b">
            O<em>7.36</em>H<em>7.36</em>L<em>7.26</em>C<em>7.26</em>
            <em>−0.10 (−1.32%)</em>
          </Legend>
          <Legend $top={58} $right={7} $color="#4d96ea">
            <b>VWAP hlc3</b>
            <em>9.07</em>
          </Legend>
          <CollapseButton>
            <svg width="20" height="12" viewBox="0 0 20 12" fill="none" stroke="#ececf0" strokeWidth="2.600">
              <path d="M2 10.500l8-8 8 8" />
            </svg>
          </CollapseButton>
          <Legend $top={703} $color="#e0525a">
            <b>Volume</b>
            <em>12.625K</em>
          </Legend>
          <LogoBadge>
            <svg width="46" height="26" viewBox="0 0 46 26" fill="#ffffff">
              <path d="M0 1h19v24h-9.500V10.500H0z" />
              <circle cx="25" cy="5.500" r="4.700" />
              <path d="M34.500 1H45L35 25H24.500z" />
            </svg>
          </LogoBadge>
          <RailHandle>
            <svg width="8" height="18" viewBox="0 0 8 18" fill="none" stroke="#b8b8c0" strokeWidth="2">
              <path d="M7 1L2 9l5 8" />
            </svg>
          </RailHandle>
          <ChartFooter>
            <FooterItem $gap={24}>3m</FooterItem>
            <FooterItem $gap={24}>1m</FooterItem>
            <FooterItem $gap={25}>5d</FooterItem>
            <FooterItem $gap={21}>1d</FooterItem>
            <ToolbarRule $right={20} />
            <LineIcon>
              <path d="M4.5 13V8.500c0-1.300.8-2 2-2h14.800c1.200 0 2 .7 2 2v14c0 1.200-.8 2-2 2H14M4.500 11.500h18.800M9 3.500v5M18.700 3.500v5M3 19.200h8M8 15.700l3.500 3.500L8 22.700" />
            </LineIcon>
            <Spacer />
            <FooterItem $spacing="1px">08:12:37 (UTC-4)</FooterItem>
            <FooterItem $gap={22}>ETH</FooterItem>
            <ToolbarRule $right={23} />
            <FooterItem $gap={26}>%</FooterItem>
            <FooterItem>log</FooterItem>
            <FooterItem $accent $gap={0}>auto</FooterItem>
          </ChartFooter>
        </ChartArea>
      </ChartBody>
    </Panel>
  );
}

/* ---------- stats ---------- */

const StatsTabs = styled.nav`
  flex-shrink: 0;
  display: flex;
  align-items: center;
  height: 80.5px;
  padding: 0 20px 0 9px;
  border-bottom: 2px solid var(--line);
`;

const StatsTab = styled.button`
  height: 57px;
  padding: 0 22px 3px;
  margin-right: 8px;
  border: 0;
  border-radius: 9px;
  background: ${(props) => (props.$active ? '#2d2e3d' : 'transparent')};
  color: var(--text);
  font: 500 25.4px/1 Roboto, sans-serif;
`;

const AvgToggle = styled.div`
  display: flex;
  align-items: center;
  gap: 18px;
  color: #97979f;

  b {
    color: var(--text);
    font-weight: 500;
  }

  i {
    width: 3px;
    height: 31px;
    background: #85858e;
  }
`;

const CardGrid = styled.div`
  display: grid;
  grid-template-columns: 781px 783px;
  grid-auto-rows: 149.5px;
  gap: 20.5px 21px;
  padding: 20px 0 0 20px;
`;

const Card = styled.div`
  padding: 26px 31px 0;
  border-radius: 16px;
  background: #232431;

  h3 {
    margin: 0 0 28px;
    color: ${(props) => props.$color};
    font-size: 25.7px;
    font-weight: 500;
  }

  p {
    margin: 0;
    color: #ffffff;
    font-size: 47px;
    font-weight: 600;
  }
`;

const StatColumns = styled.div`
  display: grid;
  grid-template-columns: 777px 777px;
  column-gap: 31px;
  padding: 34px 0 0 20px;
`;

const DayBadge = styled.div`
  display: inline-block;
  padding: 8px 20px 10px;
  margin-bottom: 14px;
  border-radius: 10px;
  background: ${(props) => (props.$amber ? '#382b20' : '#213341')};
  color: ${(props) => (props.$amber ? '#f6dc9c' : '#bce6fa')};
  font-size: 25.7px;
`;

const StatRow = styled.div`
  display: flex;
  align-items: center;
  justify-content: space-between;
  height: 51.8px;
  padding: 0 11px;
  font-size: 25.7px;

  span:last-child {
    color: ${(props) => props.$color};
  }
`;

const ScrollThumb = styled.div`
  position: absolute;
  top: 77px;
  right: 4px;
  width: 13px;
  height: 611px;
  border-radius: 7px;
  background: #15161e;
`;

const StatsPanelStyles = styled(Panel)`
  position: relative;
`;

const cards = [
  ['Number of runners', '19', '#7b84f0'],
  ['Avg High Spike', '52.31 %', '#5cc46c'],
  ['Avg Volume', '33.36 M', '#5cbdf0'],
  ['Avg Premarket Volume', '9.56 M', '#e3ad2c'],
];

const statColumns = [
  {
    title: 'Runner Day',
    rows: [
      ['Avg Market Cap [open]', '2.26 M'],
      ['Avg High Spike', '52.31 %'],
      ['Avg Low Spike', '-9.07 %'],
      ['Avg Return', '14.74 %'],
      ['Avg Change', '33.53 %'],
      ['Avg Range', '72.46 %'],
    ],
  },
  {
    title: 'Day 2',
    amber: true,
    rows: [
      ['Avg Market Cap [open]', '2.20 M'],
      ['Avg High Spike', '9.57 %'],
      ['Avg Low Spike', '-10.91 %'],
      ['Avg Return', '-4.42 %'],
      ['Avg Change', '-11.73 %'],
      ['Avg Range', '24.32 %'],
    ],
  },
];

function statColor(value) {
  if (!value.endsWith('%')) return 'var(--text)';
  return value.startsWith('-') ? 'var(--red)' : 'var(--green)';
}

function StatsPanel() {
  return (
    <StatsPanelStyles>
      <PanelHeader $height={72} $left={9}>
        <PanelTab $height={50} $pad={22} $gap={6}>Gap Stats: $UPC</PanelTab>
        <PanelTab $height={50} $pad={20} $active>Runner Stats: $UPC</PanelTab>
        <Spacer />
        <HeaderIcons $gap={26}>
          <MdSettings size={31} />
          <ExpandIcon />
          <ColorSquare $color="#5fc46a" />
        </HeaderIcons>
      </PanelHeader>
      <StatsTabs>
        <StatsTab $active>Runner overview</StatsTab>
        <StatsTab>Runner day</StatsTab>
        <StatsTab>Day 2</StatsTab>
        <Spacer />
        <AvgToggle>
          <b>Avg</b>
          <i />
          Median
        </AvgToggle>
      </StatsTabs>
      <CardGrid>
        {cards.map(([label, value, color]) => (
          <Card key={label} $color={color}>
            <h3>{label}</h3>
            <p>{value}</p>
          </Card>
        ))}
      </CardGrid>
      <StatColumns>
        {statColumns.map((column) => (
          <div key={column.title}>
            <DayBadge $amber={column.amber}>{column.title}</DayBadge>
            {column.rows.map(([label, value]) => (
              <StatRow key={label} $color={statColor(value)}>
                <span>{label}</span>
                <span>{value}</span>
              </StatRow>
            ))}
          </div>
        ))}
      </StatColumns>
      <ScrollThumb />
    </StatsPanelStyles>
  );
}

function App() {
  return (
    <>
      <GlobalStyles />
      <AppStyles>
        <LeftColumn>
          <Scanner />
          <BottomRow>
            <Halts />
            <Alerts />
          </BottomRow>
        </LeftColumn>
        <RightColumn>
          <ChartPanel />
          <StatsPanel />
        </RightColumn>
      </AppStyles>
    </>
  );
}

export default App;
